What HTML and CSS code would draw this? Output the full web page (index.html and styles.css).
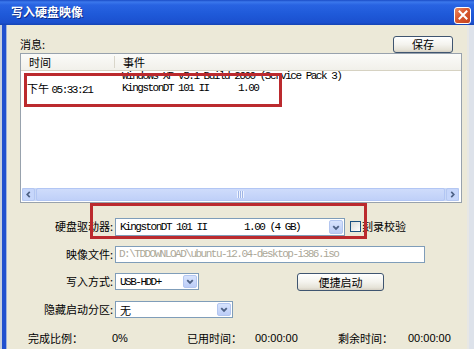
FILE: index.html
```html
<!DOCTYPE html>
<html lang="zh-CN">
<head>
<meta charset="utf-8">
<title>写入硬盘映像</title>
<link rel="stylesheet" href="styles.css">
</head>
<body>
<div class="window">
  <div class="titlebar">
    <span class="title">写入硬盘映像</span>
    <span class="close"><svg width="14" height="14" viewBox="0 0 14 14"><path d="M3.5 3.5 L10.5 10.5 M10.5 3.5 L3.5 10.5" stroke="#fff" stroke-width="2" stroke-linecap="square" fill="none"/></svg></span>
  </div>
  <div class="client">
    <div class="frame-left"></div>
    <div class="content">
      <div class="msg-head">
        <span class="msg-label">消息:</span>
        <button class="btn save-btn">保存</button>
      </div>
      <div class="listbox">
        <div class="lhead">
          <div class="hcell col1">时间</div>
          <div class="hcell col2">事件</div>
        </div>
        <div class="lrows">
          <div class="lrow first">
            <span class="col1"></span>
            <span class="col2 mono">Windows XP v5.1 Build 2600 (Service Pack 3)</span>
          </div>
          <div class="lrow">
            <span class="col1"><span class="cjk">下午</span> <span class="mono">05:33:21</span></span>
            <span class="col2 mono">KingstonDT 101 II</span>
            <span class="mono">1.00</span>
          </div>
        </div>
        <div class="hscroll">
          <span class="sbtn"><svg width="13" height="13" viewBox="0 0 13 13"><path d="M8 3.5 L5 6.5 L8 9.5" stroke="#4d6185" stroke-width="2" fill="none"/></svg></span>
          <span class="thumb"><span class="grip"></span></span>
          <span class="sbtn"><svg width="13" height="13" viewBox="0 0 13 13"><path d="M5 3.5 L8 6.5 L5 9.5" stroke="#4d6185" stroke-width="2" fill="none"/></svg></span>
        </div>
      </div>
      <div class="form">
        <label class="flabel">硬盘驱动器:</label>
        <div class="fctl">
          <div class="combo combo-drive">
            <span class="ctext mono"><span class="drive-name">KingstonDT 101 II</span><span>1.00 (4 GB)</span></span>
            <span class="arrow"><svg width="13" height="13" viewBox="0 0 13 13"><path d="M3.5 5 L6.5 8 L9.5 5" stroke="#4d6185" stroke-width="2" fill="none"/></svg></span>
          </div>
          <span class="checkbox"></span>
          <span class="chk-label">刻录校验</span>
        </div>

        <label class="flabel">映像文件:</label>
        <div class="fctl">
          <div class="textbox mono">D:\TDDOWNLOAD\ubuntu-12.04-desktop-i386.iso</div>
        </div>

        <label class="flabel">写入方式:</label>
        <div class="fctl">
          <div class="combo combo-mode">
            <span class="ctext mono">USB-HDD+</span>
            <span class="arrow"><svg width="13" height="13" viewBox="0 0 13 13"><path d="M3.5 5 L6.5 8 L9.5 5" stroke="#4d6185" stroke-width="2" fill="none"/></svg></span>
          </div>
          <button class="btn boot-btn">便捷启动</button>
        </div>

        <label class="flabel">隐藏启动分区:</label>
        <div class="fctl">
          <div class="combo combo-hide">
            <span class="ctext">无</span>
            <span class="arrow"><svg width="13" height="13" viewBox="0 0 13 13"><path d="M3.5 5 L6.5 8 L9.5 5" stroke="#4d6185" stroke-width="2" fill="none"/></svg></span>
          </div>
        </div>
      </div>
      <div class="status">
        <span>完成比例：</span>
        <span class="num">0%</span>
        <span>已用时间：</span>
        <span class="num">00:00:00</span>
        <span>剩余时间：</span>
        <span class="num">00:00:00</span>
      </div>
    </div>
    <div class="frame-right"></div>
  </div>
  <div class="mark mark-list"></div>
  <div class="mark mark-drive"></div>
</div>
</body>
</html>
```

FILE: styles.css
```css
* { box-sizing: border-box; margin: 0; padding: 0; }
html, body { width: 474px; height: 349px; overflow: hidden; }
body {
  font-family: "Noto Sans CJK SC", sans-serif;
  font-size: 11px;
  color: #000;
  background: #ece9d8;
}
.window {
  position: relative;
  width: 474px;
  height: 349px;
  display: flex;
  flex-direction: column;
  background: #ece9d8;
}
.titlebar {
  height: 25px;
  flex: none;
  display: flex;
  align-items: center;
  justify-content: space-between;
  padding: 0 3px 0 11px;
  background: linear-gradient(#1a4cc6 0, #3b78ec 2px, #2863e2 5px, #1f5ad9 55%, #1b50cf 90%, #1544b4 100%);
}
.title {
  color: #fff;
  font-weight: bold;
  font-size: 12px;
  line-height: 14px;
  text-shadow: 1px 1px 0 #0d2a86;
  margin-top: -1px;
}
.close {
  width: 17px;
  height: 17px;
  margin-top: 5px;
  border: 1px solid #fff;
  border-radius: 3px;
  background: linear-gradient(135deg, #ec8a62 0%, #d9582e 45%, #c4431f 100%);
  display: flex;
  align-items: center;
  justify-content: center;
}
.client {
  flex: 1;
  display: flex;
}
.frame-left {
  width: 7px;
  flex: none;
  background: linear-gradient(to right, #c6cfde 0 2px, #2050cf 2px 6px, #9fb3dd 6px 7px);
}
.frame-right {
  width: 7px;
  flex: none;
  background: linear-gradient(to right, #e7e7e4 0 2px, #dde2ea 2px);
}
.content {
  flex: 1;
  padding: 10px 5px 0 13px;
  display: flex;
  flex-direction: column;
}
.msg-head {
  height: 18px;
  display: flex;
  justify-content: space-between;
  align-items: center;
}
.msg-label {
  font-size: 11px;
  line-height: 12px;
}
.btn {
  font-family: "Noto Sans CJK SC", sans-serif;
  font-size: 11px;
  line-height: 14px;
  color: #000;
  border: 1px solid #3f5570;
  border-radius: 3px;
  background: linear-gradient(#ffffff 0%, #f4f3ee 50%, #e6e3d8 85%, #d4cfc3 100%);
}
.save-btn {
  width: 60px;
  height: 17px;
  margin-right: 9px;
}
.listbox {
  height: 150px;
  border: 1px solid #98a2ad;
  background: #fff;
  display: flex;
  flex-direction: column;
}
.lhead {
  height: 17px;
  flex: none;
  display: flex;
  background: linear-gradient(#fbfbf9, #f1f0ea);
  border-bottom: 1px solid #d6d2c2;
}
.hcell {
  line-height: 16px;
  font-size: 11px;
}
.col1 { width: 94px; flex: none; }
.lhead .col1 {
  padding-left: 8px;
  border-right: 1px solid #d9d6ca;
  margin: 2px 0;
  line-height: 12px;
}
.lhead .col2 { padding-left: 8px; }
.lrows {
  flex: 1;
  overflow: hidden;
}
.lrow {
  height: 12px;
  display: flex;
  align-items: center;
  white-space: pre;
}
.lrow.first { margin-top: -1px; }
.lrow .col1 { padding-left: 6px; }
.lrow .col2 { width: 123px; flex: none; padding-left: 7px; }
.lrow.first .col2 { width: auto; }
.mono {
  font-family: "Liberation Mono", monospace;
  font-size: 11px;
  letter-spacing: -1.5px;
}
.cjk { font-size: 11px; }
.hscroll {
  height: 13px;
  flex: none;
  margin: 0 2px 1px 1px;
  display: flex;
  background: #c9d8f6;
}
.sbtn {
  width: 13px;
  flex: none;
  border: 1px solid #b4c7f2;
  border-radius: 2px;
  background: #c6d6fb;
  display: flex;
  align-items: center;
  justify-content: center;
}
.thumb {
  flex: 1;
  margin: 0 1px;
  border: 1px solid #b2c6f4;
  border-radius: 2px;
  background: linear-gradient(#cfdcfb, #bfd0f8);
  display: flex;
  align-items: center;
  justify-content: center;
}
.grip {
  width: 7px;
  height: 7px;
  background: repeating-linear-gradient(to right, #eef3fe 0 1px, #9fb5e6 1px 2px);
}
.form {
  margin-top: 15px;
  display: grid;
  grid-template-columns: 93px 1fr;
  grid-template-rows: 28px 27px 28px 18px;
  column-gap: 2px;
  align-items: start;
}
.flabel {
  text-align: right;
  line-height: 17px;
  font-size: 11px;
  white-space: nowrap;
}
.fctl {
  display: flex;
  align-items: flex-start;
}
.combo {
  height: 18px;
  border: 1px solid #7f9db9;
  background: #fff;
  display: flex;
  align-items: center;
  justify-content: space-between;
  padding: 0 1px 0 4px;
}
.combo-drive { width: 230px; }
.combo-mode { width: 84px; height: 17px; }
.combo-hide { width: 118px; height: 17px; }
.ctext { white-space: pre; display: flex; }
.drive-name { width: 124px; }
.arrow {
  width: 14px;
  height: 14px;
  border: 1px solid #b3c6f0;
  border-radius: 2px;
  background: linear-gradient(#d7e3fd, #bccdf7);
  display: flex;
  align-items: center;
  justify-content: center;
}
.combo-mode .arrow, .combo-hide .arrow { height: 13px; }
.checkbox {
  width: 11px;
  height: 11px;
  margin: 3px 1px 0 5px;
  border: 1px solid #1c5180;
  background: linear-gradient(135deg, #dcdcd7, #fff);
}
.chk-label {
  line-height: 17px;
  font-size: 11px;
}
.textbox {
  width: 310px;
  height: 17px;
  border: 1px solid #7f9db9;
  background: #fff;
  color: #aca899;
  line-height: 15px;
  padding-left: 3px;
  white-space: pre;
}
.boot-btn {
  width: 87px;
  height: 18px;
  margin-left: 98px;
}
.status {
  margin-top: 12px;
  padding-left: 8px;
  display: grid;
  grid-template-columns: 84px 75px 68px 83px 70px auto;
  line-height: 14px;
  font-size: 11px;
}
.status .num {
  font-family: "Liberation Sans", sans-serif;
  font-size: 11px;
}
.mark {
  position: absolute;
  border: 3px solid #bb2a2e;
}
.mark-list {
  left: 24px;
  top: 73px;
  width: 258px;
  height: 34px;
}
.mark-drive {
  left: 90px;
  top: 203px;
  width: 277px;
  height: 36px;
}
```
